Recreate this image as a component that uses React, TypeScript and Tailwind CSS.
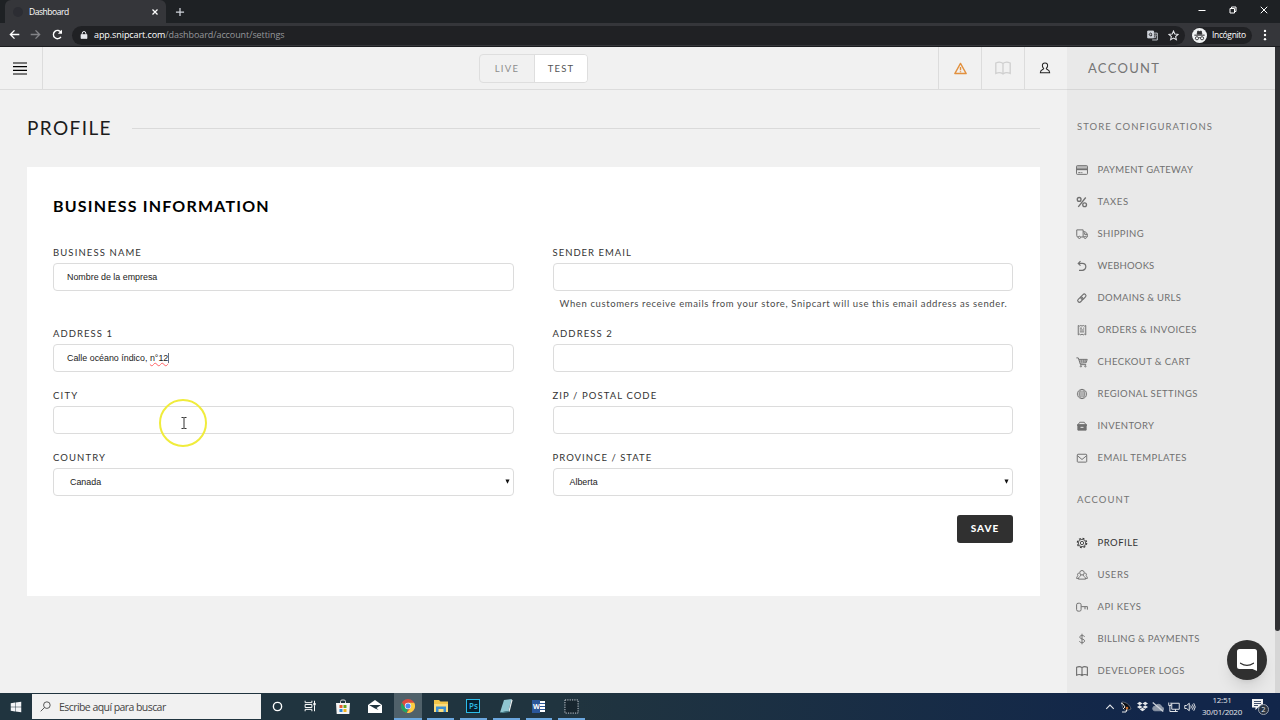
import type { ReactNode } from 'react';
import { FaDropbox, FaWindows } from 'react-icons/fa';

interface IconProps {
  children: ReactNode;
  className?: string;
}

function Icon({ children, className = 'w-3 h-3' }: IconProps) {
  return (
    <svg viewBox="0 0 16 16" className={`${className} shrink-0`} fill="none" stroke="currentColor" strokeWidth="1.3">
      {children}
    </svg>
  );
}

const bookPath = 'M8 3.5C6 1.8 3 2 .8 3v10.5c2.2-1 5.2-1 7.2.5 2-1.5 5-1.5 7.2-.5V3C13 2 10 1.8 8 3.5Zm0 0V14';

const storeItems = [
  {
    label: 'PAYMENT GATEWAY',
    tracking: 'tracking-[0.3px]',
    icon: (
      <>
        <rect x=".7" y="2.2" width="14.6" height="11.6" rx="1" />
        <path d="M1 4h14" strokeWidth="2" opacity=".5" />
        <path d="M1 7h14" strokeWidth="2.5" />
        <path d="M3 11.5h3M7 11.5h1.5" />
      </>
    ),
  },
  {
    label: 'TAXES',
    tracking: 'tracking-[0.6px]',
    icon: (
      <g strokeWidth="1.8">
        <circle cx="4.2" cy="4.5" r="2.5" />
        <circle cx="11.5" cy="11.7" r="2.5" />
        <path d="M13 2 3 14.500" />
      </g>
    ),
  },
  {
    label: 'SHIPPING',
    tracking: 'tracking-[0.4px]',
    icon: (
      <>
        <path d="M3 12H1.8L1 10V2.5h8.5V12H6M9.500 5h3L15 8v4h-1M9.500 12h1" />
        <circle cx="4.5" cy="12.5" r="1.5" />
        <circle cx="12.3" cy="12.5" r="1.5" />
        <path d="M11.5 6v2.5H15" />
      </>
    ),
  },
  {
    label: 'WEBHOOKS',
    tracking: 'tracking-[0.2px]',
    icon: <path d="M6 1.5 3 4.5l3 3M3 4.5h5.5a4.600 4.600 0 0 1 0 9.200H4" strokeWidth="1.6" />,
  },
  {
    label: 'DOMAINS & URLS',
    tracking: 'tracking-[0.28px]',
    icon: (
      <g strokeWidth="1.5">
        <rect x="-4" y="-2.3" width="8" height="4.6" rx="2.3" transform="translate(5.800 10.200) rotate(-45)" />
        <rect x="-4" y="-2.3" width="8" height="4.6" rx="2.3" transform="translate(9.800 6.200) rotate(-45)" />
      </g>
    ),
  },
  {
    label: 'ORDERS & INVOICES',
    tracking: 'tracking-[0.4px]',
    icon: (
      <>
        <path d="M3 2v12.5l1.7-1 1.7 1 1.6-1 1.7 1 1.7-1 1.6 1V2l-1.6.8L9.700 2 8 2.800 6.400 2l-1.700.8Z" />
        <path d="M5 5.500h3M5 8h6M5 10.500h6M9.500 5.500H11" />
      </>
    ),
  },
  {
    label: 'CHECKOUT & CART',
    tracking: 'tracking-[0.42px]',
    icon: (
      <>
        <path d="M.5 2.500H3l3 9h7.500M4 4.500h11L13.500 9l-8.300.6M4.500 6.700h9.500" />
        <path d="M7 4.500 7.500 9M10 4.500V9M12.500 4.500 12 9" strokeWidth=".7" />
        <circle cx="6.5" cy="13.7" r=".9" />
        <circle cx="12.5" cy="13.7" r=".9" />
      </>
    ),
  },
  {
    label: 'REGIONAL SETTINGS',
    tracking: 'tracking-[0.43px]',
    icon: (
      <g strokeWidth="1.1">
        <circle cx="8" cy="8" r="6.2" />
        <ellipse cx="8" cy="8" rx="3" ry="6.2" />
        <path d="M8 1.800v12.400M2.500 5.300h11M1.800 8h12.400M2.500 10.700h11" strokeWidth=".7" />
      </g>
    ),
  },
  {
    label: 'INVENTORY',
    tracking: 'tracking-[0.36px]',
    icon: (
      <>
        <path d="M2.500 6.500 5 3h6l2.500 3.500Z" />
        <path d="M2.500 7h11v6.500h-11Z" fill="currentColor" />
        <path d="M1.300 6.800h13.400" strokeWidth="2" />
        <path d="M6 9.800h4" stroke="#e9e9e9" />
      </>
    ),
  },
  {
    label: 'EMAIL TEMPLATES',
    tracking: 'tracking-[0.44px]',
    icon: (
      <>
        <rect x="1.7" y="3" width="12.6" height="10.5" rx="1" />
        <path d="m2 5 6 5 6-5" />
      </>
    ),
  },
];

const accountItems = [
  {
    label: 'PROFILE',
    tracking: 'tracking-[0.5px]',
    active: true,
    icon: (
      <>
        <circle cx="8" cy="8" r="5" strokeWidth="1.1" />
        <circle cx="8" cy="8" r="2.2" strokeWidth="1.1" />
        <circle cx="8" cy="8" r="6.3" strokeDasharray="2.5 2.45" strokeWidth="1.5" />
      </>
    ),
  },
  {
    label: 'USERS',
    tracking: 'tracking-[0.6px]',
    icon: (
      <>
        <circle cx="8" cy="5" r="3" />
        <path d="M6.500 8c0 2-3 1.500-3.300 5.500h9.600C12.500 9.500 9.500 10 9.500 8" />
        <path d="M4.500 5.500c-2.500-.5-3 2-1.800 3.500C1.500 10 .8 10.500.8 12.500H3M11.500 5.500c2.500-.5 3 2 1.800 3.500 1.200 1 1.900 1.500 1.900 3.500H13" />
      </>
    ),
  },
  {
    label: 'API KEYS',
    tracking: 'tracking-[0.5px]',
    icon: (
      <>
        <rect x=".8" y="3" width="6" height="10.5" rx="2" />
        <path d="M7 7.500h8.200v4M12 7.500V11" />
      </>
    ),
  },
  {
    label: 'BILLING & PAYMENTS',
    tracking: 'tracking-[0.33px]',
    icon: <path d="M11.500 5C11 3 5 2.500 5 5.500c0 3 6.500 2 6.500 5 0 3-6 3-7 .5M8 1v14" />,
  },
  {
    label: 'DEVELOPER LOGS',
    tracking: 'tracking-[0.48px]',
    icon: <path d={bookPath} strokeWidth="1.5" />,
  },
];

function BrowserChrome() {
  return (
    <div className="h-[47px] bg-[#35363a] border-b border-[#1b1c1f] flex flex-col font-['Open_Sans',sans-serif] text-white">
      {/* Tab strip */}
      <div className="h-[23px] bg-[#1e2124] flex items-center">
        <div className="ml-[5px] w-[161px] h-full bg-[#35363a] rounded-t-md flex items-center pl-2 pr-[7px]">
          <span className="w-2.5 h-2.5 rounded-full bg-[#2c2d33] mr-1.5" />
          <span className="text-[8.5px] tracking-[-0.45px] leading-3 flex-1">Dashboard</span>
          <Icon className="w-2 h-2">
            <path d="m3 3 10 10M13 3 3 13" strokeWidth="2.5" />
          </Icon>
        </div>
        <Icon className="w-2.5 h-2.5 ml-[9px] text-gray-300">
          <path d="M8 1.500v13M1.500 8h13" strokeWidth="2" />
        </Icon>
        <div className="ml-auto mr-[12px] flex items-center gap-[23px] pb-1">
          <Icon className="w-2 h-2">
            <path d="M1 9h14" strokeWidth="2" />
          </Icon>
          <Icon className="w-2 h-2">
            <path d="M2 5h9v9H2ZM5 5V2h9v9h-3" strokeWidth="2" />
          </Icon>
          <Icon className="w-2 h-2">
            <path d="m1.500 1.500 13 13M14.500 1.500l-13 13" strokeWidth="2" />
          </Icon>
        </div>
      </div>
      {/* Toolbar */}
      <div className="h-[23px] flex items-center pl-[9px]">
        <Icon className="w-[11px] h-[11px]">
          <path d="M15 8H2M8 2 2 8l6 6" strokeWidth="2" />
        </Icon>
        <Icon className="w-[11px] h-[11px] ml-2.5 text-[#828387]">
          <path d="M1 8h13M8 2l6 6-6 6" strokeWidth="2" />
        </Icon>
        <Icon className="w-[11px] h-[11px] ml-[11px]">
          <path d="M13 11.500A6 6 0 1 1 13.200 5" strokeWidth="2" />
          <path d="M14.500 1v6h-6Z" fill="currentColor" stroke="none" />
        </Icon>
        <div className="ml-[9px] mt-px w-[1113px] h-[19px] rounded-full bg-[#202124] flex items-center pl-2 pr-[6px]">
          <Icon className="w-2 h-2.5 text-gray-200">
            <path d="M2 7h12v8H2Z" fill="currentColor" />
            <path d="M4.500 7V4.500a3.500 3.500 0 0 1 7 0V7" strokeWidth="2" />
          </Icon>
          <span className="ml-1.5 flex-1 text-[9px] tracking-[-0.08px] leading-3 text-[#96989b]">
            <span className="text-white">app.snipcart.com</span>/dashboard/account/settings
          </span>
          <Icon className="w-[11px] h-[11px] text-gray-300">
            <path d="M1 1.500h8.500v10H1Z" fill="currentColor" />
            <path d="M9.500 4.500H15v10H7.500" />
            <path d="M7 5.500a2 2 0 1 0 .3 1.500H5.500" stroke="#202124" />
            <path d="M10 7.500h4M12 6.500v1M13 8c-.5 2-1.500 3-3 4M11 9.500l2 2.500" strokeWidth="1" />
          </Icon>
          <Icon className="w-[11px] h-[11px] ml-2.5 text-gray-200">
            <path d="m8 1.500 1.900 4.400 4.800.4-3.600 3.200 1.100 4.700L8 11.700l-4.200 2.500 1.100-4.700L1.300 6.300l4.800-.4Z" strokeWidth="1.500" />
          </Icon>
        </div>
        <div className="ml-[7px] mt-px w-[60px] h-[17px] rounded-full bg-[#202124] flex items-center">
          <span className="w-[15px] h-[15px] shrink-0 rounded-full bg-[#f1f3f4] flex items-center justify-center text-[#303134]">
            <Icon className="w-[11px] h-[11px]">
              <path d="M4.500 6 5.500 1.500 8 2.200l2.500-.7 1 4.500Z" fill="currentColor" />
              <path d="M.5 7.500h15" strokeWidth="1.500" />
              <circle cx="4.3" cy="12" r="2.3" />
              <circle cx="11.7" cy="12" r="2.3" />
              <path d="M6.500 11.500q1.500-1 3 0" />
            </Icon>
          </span>
          <span className="ml-[5px] text-[8.5px] tracking-[-0.35px] leading-3">Incógnito</span>
        </div>
        <Icon className="w-3 h-3 ml-[7px]">
          <g fill="currentColor" stroke="none">
            <circle cx="8" cy="2.5" r="1.6" />
            <circle cx="8" cy="8" r="1.6" />
            <circle cx="8" cy="13.5" r="1.6" />
          </g>
        </Icon>
      </div>
    </div>
  );
}

function TopBar() {
  return (
    <header className="h-[43px] flex items-center border-b border-[#dcdcdc]">
      <div className="w-[43px] h-full border-r border-[#dcdcdc] flex items-center pl-[13px]">
        <svg viewBox="0 0 14 13" className="w-3.5 h-[13px] text-black" stroke="currentColor" strokeWidth="1.2">
          <path d="M0 1h14M0 4.700h14M0 8.300h14M0 12h14" />
        </svg>
      </div>
      <div className="ml-[436px] w-[109px] h-[29px] rounded border border-[#dedede] flex text-[9.5px] leading-[27px] text-center">
        <div className="w-[55px] tracking-[1.3px] text-[#8d8d8d] border-r border-[#dedede]">LIVE</div>
        <div className="flex-1 tracking-[1.2px] text-[#555] bg-white rounded-r-[3px]">TEST</div>
      </div>
      <div className="ml-auto h-full flex">
        <div className="w-[43px] border-l border-[#dcdcdc] flex items-center justify-center text-[#e2913f]">
          <Icon className="w-[13px] h-[13px]">
            <path d="M8 1.800 15 14.200H1ZM8 6v4M8 11.300v1.400" strokeWidth="1.7" strokeLinejoin="round" />
          </Icon>
        </div>
        <div className="w-[43px] border-l border-[#dcdcdc] flex items-center justify-center text-[#cfcfcf]">
          <Icon className="w-4 h-4">
            <path d={bookPath} />
          </Icon>
        </div>
        <div className="w-[43px] border-l border-[#dcdcdc] flex items-center justify-center pr-[2px] text-[#222]">
          <Icon className="w-3 h-3">
            <path d="M8 1.200c-2.700 0-3.800 2-3.400 4.200.3 1.800 1 2.500 1.700 3.200.3 2-4.500 1-4.500 5.700h12.400c0-4.700-4.800-3.700-4.500-5.700.7-.7 1.400-1.400 1.700-3.200C11.800 3.200 10.700 1.200 8 1.200Z" strokeWidth="1.4" />
          </Icon>
        </div>
      </div>
    </header>
  );
}

interface FieldProps {
  label: string;
  tracking: string;
  hint?: string;
  select?: boolean;
  children?: ReactNode;
}

function Field({ label, tracking, hint, select, children }: FieldProps) {
  return (
    <div>
      <div className={`h-4 mb-0.5 text-[9.5px] leading-4 text-[#333] ${tracking}`}>{label}</div>
      <div
        className={`h-7 rounded border border-[#dcdcdc] bg-white flex items-center font-['Liberation_Sans',sans-serif] text-[8.9px] leading-3 text-[#222] ${select ? 'pl-4' : 'pl-[13px]'}`}
      >
        <span>{children}</span>
        {select && (
          <svg viewBox="0 0 6 6" className="ml-auto mr-[3px] mb-px w-[5px] h-[5px]">
            <path d="M.5.5h5L3 5.800Z" fill="#111" />
          </svg>
        )}
      </div>
      {hint && <p className="pt-[7px] pl-[7px] text-[9.5px] leading-3 tracking-[0.61px] text-[#4a4a4a] whitespace-nowrap">{hint}</p>}
    </div>
  );
}

function BusinessForm() {
  return (
    <section className="mt-[26px] h-[429px] bg-white pl-[26px] pr-[27px] pt-[29px]">
      <h2 className="text-base leading-5 font-bold tracking-[1.2px] text-black">BUSINESS INFORMATION</h2>
      <div className="mt-[29px] grid grid-cols-2 gap-x-[39px] gap-y-4">
        <Field label="BUSINESS NAME" tracking="tracking-[1.12px]">
          Nombre de la empresa
        </Field>
        <Field
          label="SENDER EMAIL"
          tracking="tracking-[1px]"
          hint="When customers receive emails from your store, Snipcart will use this email address as sender."
        />
        <Field label="ADDRESS 1" tracking="tracking-[1.05px]">
          Calle océano índico,{' '}
          <span className="underline decoration-wavy decoration-red-400 decoration-[0.5px] underline-offset-1 border-r border-gray-500">n°12</span>
        </Field>
        <Field label="ADDRESS 2" tracking="tracking-[1.1px]" />
        <Field label="CITY" tracking="tracking-[1.2px]" />
        <Field label="ZIP / POSTAL CODE" tracking="tracking-[1.08px]" />
        <Field label="COUNTRY" tracking="tracking-[1.1px]" select>
          Canada
        </Field>
        <Field label="PROVINCE / STATE" tracking="tracking-[1.03px]" select>
          Alberta
        </Field>
      </div>
      <div className="mt-[19px] flex justify-end">
        <button className="w-[56px] h-7 pb-px rounded-[3px] bg-[#303030] text-[10px] font-black tracking-[1px] text-white">SAVE</button>
      </div>
    </section>
  );
}

interface NavItem {
  label: string;
  tracking: string;
  icon: ReactNode;
  active?: boolean;
}

function NavList({ items }: { items: NavItem[] }) {
  return (
    <ul>
      {items.map((item) => (
        <li key={item.label} className={`h-8 flex items-center gap-[9.5px] text-[9.5px] leading-3 ${item.active ? 'text-[#333]' : 'text-[#707070]'}`}>
          <Icon>{item.icon}</Icon>
          <span className={item.tracking}>{item.label}</span>
        </li>
      ))}
    </ul>
  );
}

function Sidebar() {
  return (
    <aside className="w-[208px] bg-[#e9e9e9] text-[#757575]">
      <div className="h-[43px] border-b border-[#d6d6d6] pl-[21px] text-[13px] leading-[43px] tracking-[1.3px]">ACCOUNT</div>
      <div className="pl-2.5">
        <h3 className="pt-[29px] text-[9.5px] leading-4 tracking-[1.05px]">STORE CONFIGURATIONS</h3>
        <div className="mt-[19px] -ml-px">
          <NavList items={storeItems} />
        </div>
        <h3 className="mt-[18px] text-[9.5px] leading-4 tracking-[1.05px]">ACCOUNT</h3>
        <div className="mt-[19px] -ml-px">
          <NavList items={accountItems} />
        </div>
      </div>
    </aside>
  );
}

function TaskApp({ children, active = false, open = false }: { children: ReactNode; active?: boolean; open?: boolean }) {
  return (
    <div className={`h-full flex flex-col items-center ${active ? 'w-[28.7px] mx-0.5 bg-[#50616a]' : 'w-[26.7px] mx-[3px]'}`}>
      <div className="flex-1 flex items-center pt-px">{children}</div>
      <div className={`w-full h-0.5 ${open ? 'bg-[#6ba7df]' : ''}`} />
    </div>
  );
}

function Taskbar() {
  return (
    <footer className="h-[27px] bg-linear-to-r from-[#20343f] from-45% to-[#12264a] to-90% flex items-center text-white font-['Open_Sans',sans-serif]">
      <div className="w-8 flex justify-center">
        <FaWindows className="w-3 h-3 text-gray-100" />
      </div>
      <div className="w-[229px] h-[25px] bg-[#f1f1f1] flex items-center pl-2 text-[#444]">
        <Icon className="w-[11px] h-[11px]">
          <circle cx="10" cy="6" r="4.8" />
          <path d="m6.500 9.500-5.500 5.500" />
        </Icon>
        <span className="ml-2 text-[10.5px] tracking-[-0.56px] leading-4">Escribe aquí para buscar</span>
      </div>
      <TaskApp>
        <Icon className="w-[11px] h-[11px]">
          <circle cx="8" cy="8" r="6" strokeWidth="2" />
        </Icon>
      </TaskApp>
      <TaskApp>
        <Icon className="w-3 h-3">
          <path d="M1.500 1v2.500h9V1M1.500 15v-2.500h9V15M1.500 6h9v4h-9ZM14 1v3M14 7v8" />
          <path d="M14 4v3" strokeWidth="3" />
        </Icon>
      </TaskApp>
      <TaskApp>
        <svg viewBox="0 0 14 15" className="w-3.5 h-[15px]">
          <path d="M4.500 4V2.500a1.500 1.500 0 0 1 1.500-1.500h2A1.500 1.500 0 0 1 9.500 2.500V4" fill="none" stroke="#ddd" />
          <path d="M0 4h14l-.7 11H.7Z" fill="#f4f4f4" />
          <path d="M3.500 6h3v3h-3Z" fill="#e4572e" />
          <path d="M7.500 6h3v3h-3Z" fill="#6aa51e" />
          <path d="M3.500 10h3v3h-3Z" fill="#2b88d8" />
          <path d="M7.500 10h3v3h-3Z" fill="#f2b21b" />
        </svg>
      </TaskApp>
      <TaskApp>
        <svg viewBox="0 0 14 13" className="w-3.5 h-[13px]">
          <path d="M0 5 7 0l7 5v8H0Z" fill="#fff" />
          <path d="M1 5h12L8.500 8l2 2L7 8.500Z" fill="#20343f" />
        </svg>
      </TaskApp>
      <TaskApp active open>
        <svg viewBox="0 0 14 14" className="w-3.5 h-3.5">
          <circle cx="7" cy="7" r="7" fill="#dd4b3e" />
          <path d="M.9 3.600 4.200 9 7 10.300 5.600 13.900A7 7 0 0 1 .9 3.600Z" fill="#1fa463" />
          <path d="M7 3.800h6.200A7 7 0 0 1 5.800 13.900L9.800 8.600Z" fill="#fccd42" />
          <circle cx="7" cy="7" r="3.2" fill="#f1f1f1" />
          <circle cx="7" cy="7" r="2.5" fill="#4a8af4" />
        </svg>
      </TaskApp>
      <TaskApp open>
        <svg viewBox="0 0 14 12" className="w-3.5 h-3">
          <path d="M0 0h5l1.500 1.500H14V12H0Z" fill="#f3c54a" />
          <path d="M0 4h14v8H0Z" fill="#fbdc7c" />
          <path d="M2 12V6.500h10V12H9.500V9h-5v3Z" fill="#3d8fd1" />
        </svg>
      </TaskApp>
      <TaskApp open>
        <div className="w-3.5 h-3.5 border border-[#2dbce8] bg-[#06222f] text-[#2dbce8] text-[8px] leading-[12px] text-center font-semibold">Ps</div>
      </TaskApp>
      <TaskApp open>
        <svg viewBox="0 0 14 14" className="w-3.5 h-3.5">
          <path d="M5 1 12.500 0 9.500 12 1 13.500Z" fill="#8fc5d1" />
          <path d="m12.500 0 1 1.500L10.500 13l-1-1Z" fill="#e8eef0" />
          <path d="M1 13.500 9.500 12l1 1-7 1Z" fill="#4d8794" />
        </svg>
      </TaskApp>
      <TaskApp open>
        <div className="w-[13px] h-[13px] flex items-center">
          <div className="w-2 h-[13px] bg-[#2b579a] text-[7px] leading-[13px] text-center font-bold">W</div>
          <div className="w-[5px] h-[11px] bg-white flex flex-col justify-evenly">
            <div className="h-px bg-[#2b579a]" />
            <div className="h-px bg-[#2b579a]" />
            <div className="h-px bg-[#2b579a]" />
          </div>
        </div>
      </TaskApp>
      <TaskApp open>
        <Icon className="w-[15px] h-[15px] text-gray-300">
          <rect x="1" y="1" width="14" height="14" fill="#17252e" strokeWidth="1" strokeDasharray="1.3 1.2" />
        </Icon>
      </TaskApp>
      {/* System tray */}
      <div className="ml-auto flex items-center text-gray-200">
        <Icon className="w-2.5 h-2.5">
          <path d="m2 11 6-6 6 6" strokeWidth="1.700" />
        </Icon>
        <svg viewBox="0 0 12 12" className="w-3 h-3 ml-[5px]">
          <path d="M2 1c4 0 8 3 9 7L6 10C3 8 1.500 5 2 1Z" fill="#0c0f15" stroke="#8a8f98" strokeWidth=".6" />
          <path d="m1 2 2 1 2 3-2 2M2 11h4l1-3" fill="none" stroke="#e8e8e8" />
          <circle cx="7" cy="7" r="1.3" fill="#c96b2c" />
        </svg>
        <FaDropbox className="w-[11px] h-[11px] ml-[5px]" />
        <Icon className="w-3 h-3 ml-1 text-[#8d97a8]">
          <path d="M3.500 13h9.500a2.500 2.500 0 0 0 0-5A4.500 4.500 0 0 0 4.500 7 3 3 0 0 0 3.500 13Z" fill="currentColor" />
          <path d="m1 2 14 12" strokeWidth="1.700" stroke="#cfd4dc" />
        </Icon>
        <Icon className="w-3 h-3 ml-1">
          <path d="M5 3h10v8H5ZM8 14h5M10 11v3M1 2v4h3V2M2.500 6v8H8" />
        </Icon>
        <Icon className="w-3 h-3 ml-1">
          <path d="M1 6h2.500L7 3v10L3.500 10H1ZM9 6q1.500 2 0 4M11 4.500q3 3.500 0 7M13 3q4 5 0 10" />
        </Icon>
        <div className="ml-1.5 w-10 pb-0.5 text-[8px] leading-[12px] text-center tracking-[-0.25px] whitespace-nowrap">
          <div>12:51</div>
          <div>30/01/2020</div>
        </div>
        <div className="relative ml-[10px] mr-[12px] w-4 h-4">
          <svg viewBox="0 0 12 12" className="w-3 h-3">
            <path d="M0 0h11v8.500H6L3.500 11V8.500H0Z" fill="#f3f3f3" />
            <path d="M2 2.500h7M2 4.500h7M2 6.500h4" stroke="#12264a" strokeWidth=".8" />
          </svg>
          <span className="absolute left-[6px] top-[5px] w-[11px] h-[11px] rounded-full border border-gray-400 bg-[#283443] text-[7.5px] leading-[9px] text-center">2</span>
        </div>
      </div>
    </footer>
  );
}

export default function App() {
  return (
    <div className="relative w-[1280px] h-[720px] overflow-hidden flex flex-col bg-[#f1f1f1] font-['Lato',sans-serif]">
      <BrowserChrome />
      <div className="h-[646px] flex overflow-hidden">
        <main className="w-[1067px]">
          <TopBar />
          <div className="pl-[27px] pr-[27px] pt-[24px]">
            <div className="flex items-center gap-5">
              <h1 className="text-[19px] leading-[27px] tracking-[1.4px] text-[#1c1c1c]">PROFILE</h1>
              <div className="flex-1 h-px mt-px bg-[#dadada]" />
            </div>
            <BusinessForm />
          </div>
        </main>
        <Sidebar />
        {/* Scrollbar */}
        <div className="w-[5px] bg-[#d6d6d6]">
          <div className="h-[584px] rounded-b-full bg-[#303134]" />
        </div>
      </div>
      <Taskbar />

      {/* Chat launcher */}
      <div className="absolute left-[1227px] top-[640px] w-10 h-10 rounded-full bg-[#303030] shadow-lg flex items-center justify-center">
        <svg viewBox="0 0 20 22" className="w-5 h-[22px]">
          <path d="M2.500 0h15A2.500 2.500 0 0 1 20 2.500V22l-4.500-2h-13A2.500 2.500 0 0 1 0 17.500v-15A2.500 2.500 0 0 1 2.500 0Z" fill="#fff" />
          <path d="M3.500 14.200q6.500 4.500 13 0" fill="none" stroke="#303030" strokeWidth="1.2" strokeLinecap="round" />
        </svg>
      </div>

      {/* Pointer highlight */}
      <div className="absolute left-[159px] top-[399px] w-[48px] h-[48px] rounded-full border-[2.5px] border-[#f0ec3c] flex items-center justify-center">
        <svg viewBox="0 0 6 12" className="w-1.5 h-3 ml-0.5" fill="none" stroke="#333" strokeWidth="1">
          <path d="M.5.500h2L3 1l.5-.5h2M.5 11.500h2L3 11l.5.500h2M3 1v10" />
        </svg>
      </div>
    </div>
  );
}
